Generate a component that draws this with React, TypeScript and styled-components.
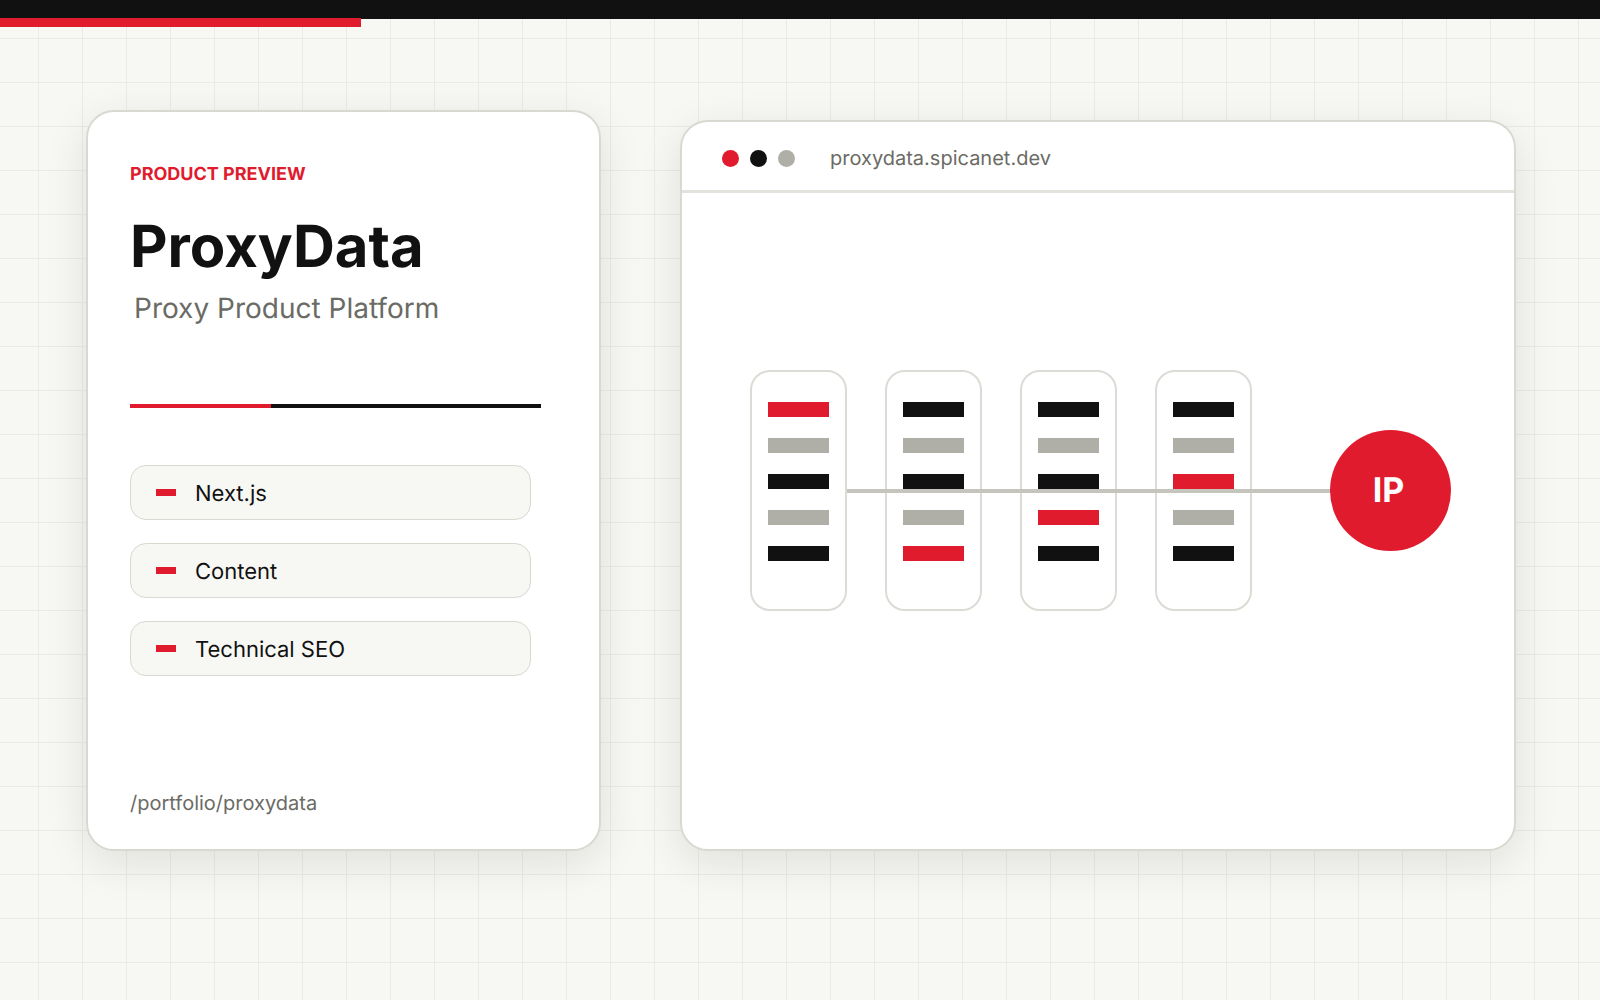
import React from "react";
import styled, { createGlobalStyle } from "styled-components";

const RED = "#e11b2e";
const INK = "#111111";
const STONE = "#b0afa7";
const MUTED = "#6b6b65";
const EDGE = "#d9d9d2";

const GlobalStyle = createGlobalStyle`
  html, body {
    margin: 0;
    padding: 0;
  }
  body {
    font-family: Inter, "Liberation Sans", sans-serif;
    text-rendering: geometricPrecision;
    background: #f7f7f3;
  }
`;

const Page = styled.div`
  position: relative;
  width: 1600px;
  height: 1000px;
  overflow: hidden;
  background-color: #f7f7f3;
  background-image:
    linear-gradient(to right, #ebebe6 1px, transparent 1px),
    linear-gradient(to bottom, #ebebe6 1px, transparent 1px);
  background-size: 44px 44px;
  background-position: 38px 38px;
`;

const TopBar = styled.div`
  height: 19px;
  background: ${INK};
`;

const TopProgress = styled.div`
  position: absolute;
  left: 0;
  top: 18px;
  width: 361px;
  height: 9px;
  background: ${RED};
`;

const Stage = styled.main`
  display: flex;
  align-items: flex-end;
  gap: 79px;
  padding: 91px 0 0 86px;
`;

const Card = styled.section`
  box-sizing: border-box;
  background: #ffffff;
  border: 2px solid ${EDGE};
  border-radius: 28px;
  box-shadow: 0 12px 44px rgba(17, 17, 17, 0.1);
`;

const InfoCard = styled(Card)`
  display: flex;
  flex-direction: column;
  width: 515px;
  height: 741px;
  padding: 52px 0 0 42px;
`;

const Eyebrow = styled.div`
  font-size: 18px;
  line-height: 22px;
  font-weight: 700;
  color: ${RED};
`;

const Title = styled.h1`
  margin: 26px 0 0;
  font-size: 58px;
  line-height: 68px;
  font-weight: 700;
  color: ${INK};
`;

const Subtitle = styled.p`
  margin: 10px 0 0 4px;
  font-size: 28px;
  line-height: 36px;
  font-weight: 400;
  color: ${MUTED};
`;

const Rule = styled.div`
  display: flex;
  width: 411px;
  height: 4px;
  margin-top: 78px;
  background: ${INK};
`;

const RuleAccent = styled.div`
  width: 141px;
  background: ${RED};
`;

const ChipList = styled.ul`
  display: flex;
  flex-direction: column;
  gap: 23px;
  margin: 57px 0 0;
  padding: 0;
  list-style: none;
`;

const Chip = styled.li`
  box-sizing: border-box;
  display: flex;
  align-items: center;
  gap: 19px;
  width: 401px;
  height: 55px;
  padding-left: 25px;
  background: #f7f7f3;
  border: 1px solid ${EDGE};
  border-radius: 16px;
  font-size: 22px;
  color: ${INK};
`;

const ChipMark = styled.span`
  width: 20px;
  height: 7px;
  background: ${RED};
`;

const ChipLabel = styled.span`
  padding-top: 2px;
`;

const PathLabel = styled.div`
  margin-top: auto;
  padding-bottom: 34px;
  font-size: 20px;
  line-height: 24px;
  color: ${MUTED};
`;

const BrowserCard = styled(Card)`
  width: 836px;
  height: 731px;
`;

const BrowserBar = styled.header`
  display: flex;
  align-items: center;
  gap: 11px;
  height: 64px;
  padding: 4px 0 0 40px;
  border-bottom: 3px solid #e3e3dd;
`;

const Dot = styled.span<{ $color: string }>`
  width: 17px;
  height: 17px;
  border-radius: 50%;
  background: ${(p) => p.$color};
`;

const Address = styled.span`
  margin-left: 24px;
  font-size: 20px;
  color: ${MUTED};
`;

const Diagram = styled.div`
  position: relative;
  display: flex;
  align-items: center;
  margin: 177px 0 0 68px;
  height: 241px;
`;

const Rack = styled.div`
  box-sizing: border-box;
  display: flex;
  flex-direction: column;
  gap: 21px;
  width: 97px;
  height: 241px;
  margin-right: 38px;
  padding: 30px 0 0 16px;
  background: #ffffff;
  border: 2px solid #dcdcd6;
  border-radius: 20px;
`;

const Slot = styled.div<{ $color: string }>`
  width: 61px;
  height: 15px;
  background: ${(p) => p.$color};
`;

const Wire = styled.div`
  position: absolute;
  left: 97px;
  top: 119px;
  width: 485px;
  height: 4px;
  background: #c5c5bd;
`;

const IpNode = styled.div`
  position: absolute;
  left: 580px;
  top: 60px;
  display: flex;
  align-items: center;
  justify-content: center;
  width: 121px;
  height: 121px;
  padding: 0 4px 1px 0;
  box-sizing: border-box;
  border-radius: 50%;
  background: ${RED};
  color: #ffffff;
  font-size: 34px;
  font-weight: 700;
`;

const racks = [
  [RED, STONE, INK, STONE, INK],
  [INK, STONE, INK, STONE, RED],
  [INK, STONE, INK, RED, INK],
  [INK, STONE, RED, STONE, INK],
];

const chips = ["Next.js", "Content", "Technical SEO"];

export default function App() {
  return (
    <Page>
      <GlobalStyle />
      <TopBar />
      <TopProgress />
      <Stage>
        <InfoCard>
          <Eyebrow>PRODUCT PREVIEW</Eyebrow>
          <Title>ProxyData</Title>
          <Subtitle>Proxy Product Platform</Subtitle>
          <Rule>
            <RuleAccent />
          </Rule>
          <ChipList>
            {chips.map((chip) => (
              <Chip key={chip}>
                <ChipMark />
                <ChipLabel>{chip}</ChipLabel>
              </Chip>
            ))}
          </ChipList>
          <PathLabel>/portfolio/proxydata</PathLabel>
        </InfoCard>
        <BrowserCard>
          <BrowserBar>
            <Dot $color={RED} />
            <Dot $color={INK} />
            <Dot $color={STONE} />
            <Address>proxydata.spicanet.dev</Address>
          </BrowserBar>
          <Diagram>
            {racks.map((slots, i) => (
              <Rack key={i}>
                {slots.map((color, j) => (
                  <Slot key={j} $color={color} />
                ))}
              </Rack>
            ))}
            <Wire />
            <IpNode>IP</IpNode>
          </Diagram>
        </BrowserCard>
      </Stage>
    </Page>
  );
}
